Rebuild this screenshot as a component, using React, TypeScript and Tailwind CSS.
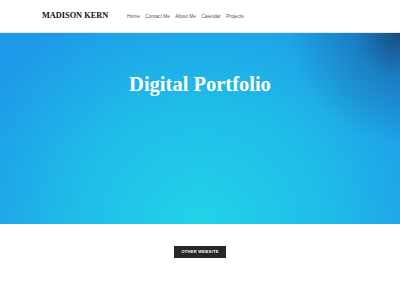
export default function App() {
  const nav = ["Home", "Contact Me", "About Me", "Calendar", "Projects"];
  return (
    <div className="w-[400px] h-[300px] overflow-hidden bg-white">
      <header className="h-[33px] flex items-center bg-white border-b border-gray-200">
        <div className="pl-[42px] w-[127px] font-['Liberation_Serif',serif] font-bold text-[8.3px] text-[#111] leading-none">
          MADISON KERN
        </div>
        <nav className="flex gap-[5.5px] pt-[2px] font-['Liberation_Sans',sans-serif] text-[4.8px] text-[#555] leading-none">
          {nav.map((n) => (
            <span key={n}>{n}</span>
          ))}
        </nav>
      </header>
      <section className="relative h-[191px] bg-[radial-gradient(ellipse_at_50%_100%,#22d3e8_0%,#1fbce8_45%,#1e98e8_90%)]">
        <div className="absolute inset-0 bg-[radial-gradient(circle_at_100%_0%,rgba(20,50,90,0.75)_0%,rgba(20,60,110,0.3)_10%,rgba(0,0,0,0)_25%)]" />
        <h1 className="relative pt-[41px] text-center font-['Liberation_Serif',serif] font-bold text-[20.5px] text-white leading-none">
          Digital Portfolio
        </h1>
      </section>
      <div className="flex justify-center pt-[22px]">
        <div className="w-[52px] h-[12px] bg-[#272727] flex items-center justify-center font-['Liberation_Sans',sans-serif] font-bold text-[4px] tracking-[0.3px] text-white">
          OTHER WEBSITE
        </div>
      </div>
    </div>
  );
}
